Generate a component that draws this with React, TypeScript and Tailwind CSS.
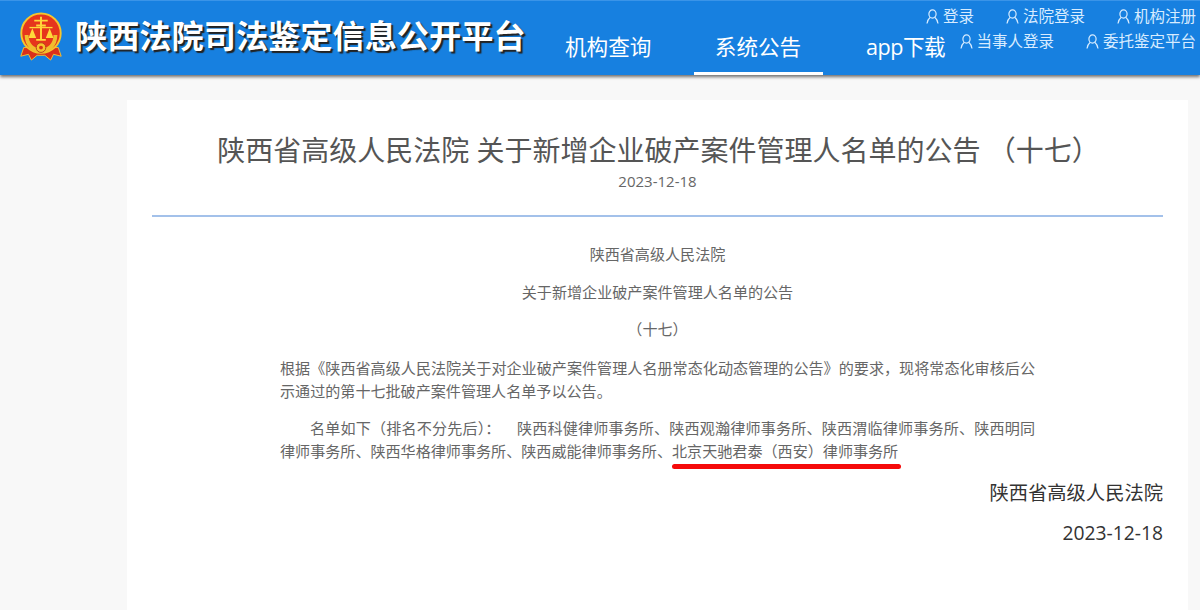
import React from "react";

const font = { fontFamily: '"Open Sans","Noto Sans CJK SC",sans-serif' };

function Emblem() {
  return (
    <svg width="44" height="50" viewBox="0 0 44 52" className="shrink-0">
      <path d="M4 37 L1 46 L9 44 L12 50 L18 45 L26 45 L32 50 L35 44 L43 46 L40 37 Z" fill="#d9301a" stroke="#f2c230" strokeWidth="1" />
      <circle cx="22" cy="22" r="20.5" fill="#e6351c" stroke="#f6c52c" strokeWidth="2" />
      <path d="M5 24 C5 36 13 43 22 43 C31 43 39 36 39 24 L35 24 C35 33 29 38 22 38 C15 38 9 33 9 24 Z" fill="#f0bd2e" />
      <circle cx="22" cy="37" r="5" fill="#f6c52c" stroke="#b5401a" strokeWidth="1" />
      <circle cx="22" cy="37" r="2" fill="#d9301a" />
      <path d="M21 5 h2 v3 h6 v2 h-6 v3 h4 v2 h-4 v13 h4 v2 h-10 v-2 h4 v-13 h-4 v-2 h4 v-3 h-6 v-2 h6 z" fill="#ffd83a" />
      <path d="M13 17 L9 27 h8 Z M31 17 L27 27 h8 Z" fill="#ffd83a" />
      <path d="M10 15.5 h24 v1.4 h-24 z" fill="#ffd83a" />
    </svg>
  );
}

function User() {
  return (
    <svg width="13" height="15" viewBox="0 0 13 15" fill="none" stroke="currentColor" strokeWidth="1.2" className="shrink-0">
      <ellipse cx="6.5" cy="5" rx="3.6" ry="4.2" />
      <path d="M4 8.5 C2.5 9.8 1.3 12 1 14.5 M9 8.5 C10.5 9.8 11.7 12 12 14.5" />
    </svg>
  );
}

function Link({ label }: { label: string }) {
  return (
    <span className="flex items-center gap-[4px] text-[15.5px] leading-[20px] text-[#d8ecff] whitespace-nowrap">
      <User />
      {label}
    </span>
  );
}

export default function App() {
  return (
    <div style={font} className="h-[610px] overflow-hidden bg-[#f8f8f8]">
      <header className="h-[75px] bg-[#1780e0] border-t border-t-[#3a94e8] flex shadow-[0_2px_3px_rgba(0,0,0,0.55)] relative">
        <div className="flex items-center pl-[19px] w-[565px] shrink-0 gap-[12px] pb-[3px]">
          <Emblem />
          <h1 className="text-[32.2px] leading-none font-bold text-white whitespace-nowrap [text-shadow:2px_2px_1px_#222]">
            陕西法院司法鉴定信息公开平台
          </h1>
        </div>
        <nav className="flex items-start text-[21.6px] text-white w-[361px] shrink-0">
          <span className="w-[129px] shrink-0 pt-[30px]">机构查询</span>
          <span className="w-[129px] shrink-0 h-[74px] pt-[30px] pr-[1px] text-center border-b-[3px] border-b-white">系统公告</span>
          <span className="shrink-0 pt-[30px] pl-[43px] whitespace-nowrap tracking-[-0.5px]">app下载</span>
        </nav>
        <div className="flex-1 flex flex-col items-end pt-[5px] pr-[4px] gap-[5px]">
          <div className="flex gap-[32px]">
            <Link label="登录" />
            <Link label="法院登录" />
            <Link label="机构注册" />
          </div>
          <div className="flex gap-[32px]">
            <Link label="当事人登录" />
            <Link label="委托鉴定平台" />
          </div>
        </div>
      </header>

      <main className="ml-[127px] w-[1061px] mt-[25px] bg-white px-[25px] h-[600px]">
        <h2 className="pt-[30px] pl-[2px] text-[28px] leading-[40px] text-center text-[#555] whitespace-nowrap">
          陕西省高级人民法院 关于新增企业破产案件管理人名单的公告 （十七）
        </h2>
        <div className="mt-[1px] text-[15px] leading-[20px] text-center text-[#666]">2023-12-18</div>
        <div className="mt-[24px] h-[2px] bg-[#a3c1ea]" />
        <div className="mt-[26px] mx-auto w-[755px] text-[15.08px] leading-[23.5px] text-[#666]">
          <p className="text-center">陕西省高级人民法院</p>
          <p className="mt-[14px] text-center">关于新增企业破产案件管理人名单的公告</p>
          <p className="mt-[14px] text-center">（十七）</p>
          <p className="mt-[15px] text-justify">
            根据《陕西省高级人民法院关于对企业破产案件管理人名册常态化动态管理的公告》的要求，现将常态化审核后公示通过的第十七批破产案件管理人名单予以公告。
          </p>
          <p className="mt-[13px] indent-[30px] text-justify">
            名单如下（排名不分先后）：&nbsp;&nbsp;&nbsp; 陕西科健律师事务所、陕西观瀚律师事务所、陕西渭临律师事务所、陕西明同律师事务所、陕西华格律师事务所、陕西威能律师事务所、
            <span className="relative">
              北京天驰君泰（西安）律师事务所
              <span className="absolute left-0 right-[-3px] top-[23px] h-[5px] rounded-full bg-[#f50a0a]" />
            </span>
          </p>
        </div>
        <div className="mt-[16px] text-right text-[19.3px] leading-[26px] text-[#333]">陕西省高级人民法院</div>
        <div className="mt-[14px] text-right text-[19.3px] leading-[26px] text-[#333]">2023-12-18</div>
      </main>
    </div>
  );
}
